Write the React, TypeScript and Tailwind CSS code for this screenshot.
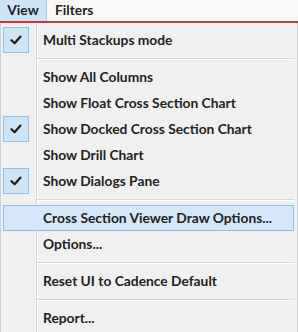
import React from 'react';

type Item =
  | { kind: 'item'; label: string; checked?: boolean; active?: boolean }
  | { kind: 'sep' };

const ITEMS: Item[] = [
  { kind: 'item', label: 'Multi Stackups mode', checked: true },
  { kind: 'sep' },
  { kind: 'item', label: 'Show All Columns' },
  { kind: 'item', label: 'Show Float Cross Section Chart' },
  { kind: 'item', label: 'Show Docked Cross Section Chart', checked: true },
  { kind: 'item', label: 'Show Drill Chart' },
  { kind: 'item', label: 'Show Dialogs Pane', checked: true },
  { kind: 'sep' },
  { kind: 'item', label: 'Cross Section Viewer Draw Options...', active: true },
  { kind: 'item', label: 'Options...' },
  { kind: 'sep' },
  { kind: 'item', label: 'Reset UI to Cadence Default' },
  { kind: 'sep' },
  { kind: 'item', label: 'Report...' },
];

function Check() {
  return (
    <svg width="12" height="10" viewBox="0 0 12 10" fill="none">
      <path d="M1.5 5.2 L4.6 8.2 L10.5 1.6" stroke="#1b1b1b" strokeWidth="2.2" strokeLinecap="round" strokeLinejoin="round" />
    </svg>
  );
}

export default function App() {
  return (
    <div className="w-[298px] h-[332px] overflow-hidden bg-[#f0f0f0] font-['Lato',sans-serif] text-[13.8px] font-bold text-[#222222]">
      {/* Menu bar */}
      <div className="h-[21px] flex items-stretch bg-[#f8f8f8]">
        <div className="w-[47px] flex items-center justify-center bg-[#cce4f7] border-r border-[#a9cdef]">View</div>
        <div className="flex items-center px-[8px]">Filters</div>
      </div>
      <div className="h-[2px] bg-[#c9393b]" />

      {/* Dropdown */}
      <div className="h-[309px] border-l border-r border-[#cfcfcf] pt-[4px] pl-[2px] pr-[3px] bg-[linear-gradient(to_right,transparent_35px,#d6d6d6_35px,#d6d6d6_36px,#ffffff_36px,#ffffff_37px,transparent_37px)]">
        {ITEMS.map((it, i) =>
          it.kind === 'sep' ? (
            <div key={i} className="h-[11px] flex items-center pl-[34px]">
              <div className="flex-1 border-t border-[#d6d6d6] border-b border-b-white" />
            </div>
          ) : (
            <div
              key={i}
              className={`h-[26px] flex items-center ${it.active ? 'bg-[#d5e8f8] border border-[#8cc0ee]' : 'border border-transparent'}`}
            >
              <div className="w-[32px] h-full flex items-center">
                {it.checked && (
                  <div className="w-[26px] h-[26px] -ml-px flex items-center justify-center bg-[#cde5f7] border border-[#8ec3ee]">
                    <Check />
                  </div>
                )}
              </div>
              <div className="pl-[7px] whitespace-nowrap">{it.label}</div>
            </div>
          )
        )}
      </div>
    </div>
  );
}
